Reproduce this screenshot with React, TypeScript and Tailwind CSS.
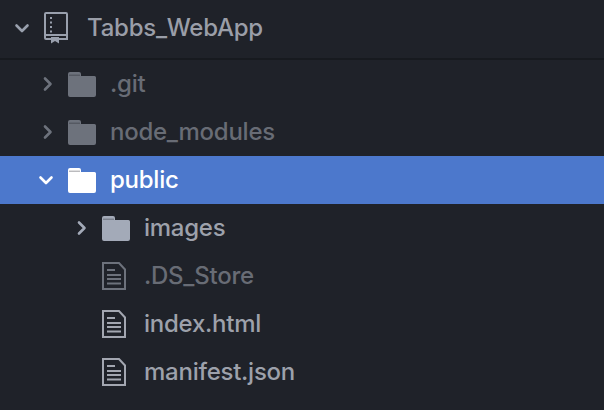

const Chevron = ({ down, color }: { down?: boolean; color: string }) => (
  <svg width="16" height="16" viewBox="0 0 16 16" fill="none" stroke={color} strokeWidth="2.6" strokeLinecap="round" strokeLinejoin="round" className="shrink-0">
    {down ? <path d="M2.5 5.500 8 11l5.500-5.500" /> : <path d="M5 2.500 10.500 8 5 13.500" />}
  </svg>
);

const Folder = ({ color }: { color: string }) => (
  <svg width="28" height="25" viewBox="0 0 28 25" className="shrink-0">
    <path fill={color} d="M0 2a2 2 0 0 1 2-2h9a2 2 0 0 1 2 2v2h13.500A1.500 1.500 0 0 1 28 5.500V23a2 2 0 0 1-2 2H2a2 2 0 0 1-2-2z" />
    <path d="M1 3.200h11" stroke="#1f2229" strokeWidth="0.8" opacity="0.55" />
  </svg>
);

const FileIcon = ({ color }: { color: string }) => (
  <svg width="24" height="28" viewBox="0 0 24 28" fill="none" stroke={color} strokeWidth="2" className="shrink-0">
    <path d="M1 1h16l6 6.500V27H1z" strokeLinejoin="miter" />
    <path d="M5 8h8M5 13h14M5 17h14M5 21.500h14" />
  </svg>
);

const BookIcon = () => (
  <svg width="24" height="32" viewBox="0 0 24 32" fill="none" stroke="#99a0ad" strokeWidth="2" className="shrink-0">
    <path d="M2 1h20a1 1 0 0 1 1 1v25H2a1 1 0 0 1-1-1V2a1 1 0 0 1 1-1z" />
    <path d="M1 23h22" />
    <path d="M7 5v2M7 9.500v2M7 14v2M7 18.500v2" strokeWidth="2" />
    <path d="M7 25h8v6.500l-4-2.500-4 2.500z" fill="#99a0ad" stroke="none" />
  </svg>
);

const textClass = "text-[24px] leading-none whitespace-nowrap font-['Inter',sans-serif] font-[450] tracking-[-0.25px]";

export default function App() {
  return (
    <div className="w-[604px] h-[410px] bg-[#1f2229] overflow-hidden flex flex-col">
      <div className="h-[60px] shrink-0 flex items-center border-b-2 border-[#171a1f] pl-[14px] pb-[2px]">
        <Chevron down color="#99a0ad" />
        <div className="ml-[14px]"><BookIcon /></div>
        <span className={`${textClass} ml-[19px] text-[#9a9ea8]`}>Tabbs_WebApp</span>
      </div>
      <div className="h-[48px] flex items-center pl-[40px]">
        <Chevron color="#6d727c" />
        <div className="ml-[12px]"><Folder color="#6d727c" /></div>
        <span className={`${textClass} ml-[14px] text-[#686c75]`}>.git</span>
      </div>
      <div className="h-[48px] flex items-center pl-[40px]">
        <Chevron color="#6d727c" />
        <div className="ml-[12px]"><Folder color="#6d727c" /></div>
        <span className={`${textClass} ml-[14px] text-[#686c75]`}>node_modules</span>
      </div>
      <div className="h-[48px] flex items-center pl-[38px] bg-[#4c78cc]">
        <Chevron down color="#ffffff" />
        <div className="ml-[14px]"><Folder color="#ffffff" /></div>
        <span className={`${textClass} ml-[14px] text-white`}>public</span>
      </div>
      <div className="h-[48px] flex items-center pl-[74px]">
        <Chevron color="#a3aab8" />
        <div className="ml-[12px]"><Folder color="#a3aab8" /></div>
        <span className={`${textClass} ml-[14px] text-[#9da1ab]`}>images</span>
      </div>
      <div className="h-[48px] flex items-center pl-[102px]">
        <FileIcon color="#6d727c" />
        <span className={`${textClass} ml-[18px] text-[#686c75]`}>.DS_Store</span>
      </div>
      <div className="h-[48px] flex items-center pl-[102px]">
        <FileIcon color="#a3a7b1" />
        <span className={`${textClass} ml-[18px] text-[#9da1ab]`}>index.html</span>
      </div>
      <div className="h-[48px] flex items-center pl-[102px]">
        <FileIcon color="#a3a7b1" />
        <span className={`${textClass} ml-[18px] text-[#9da1ab]`}>manifest.json</span>
      </div>
    </div>
  );
}
